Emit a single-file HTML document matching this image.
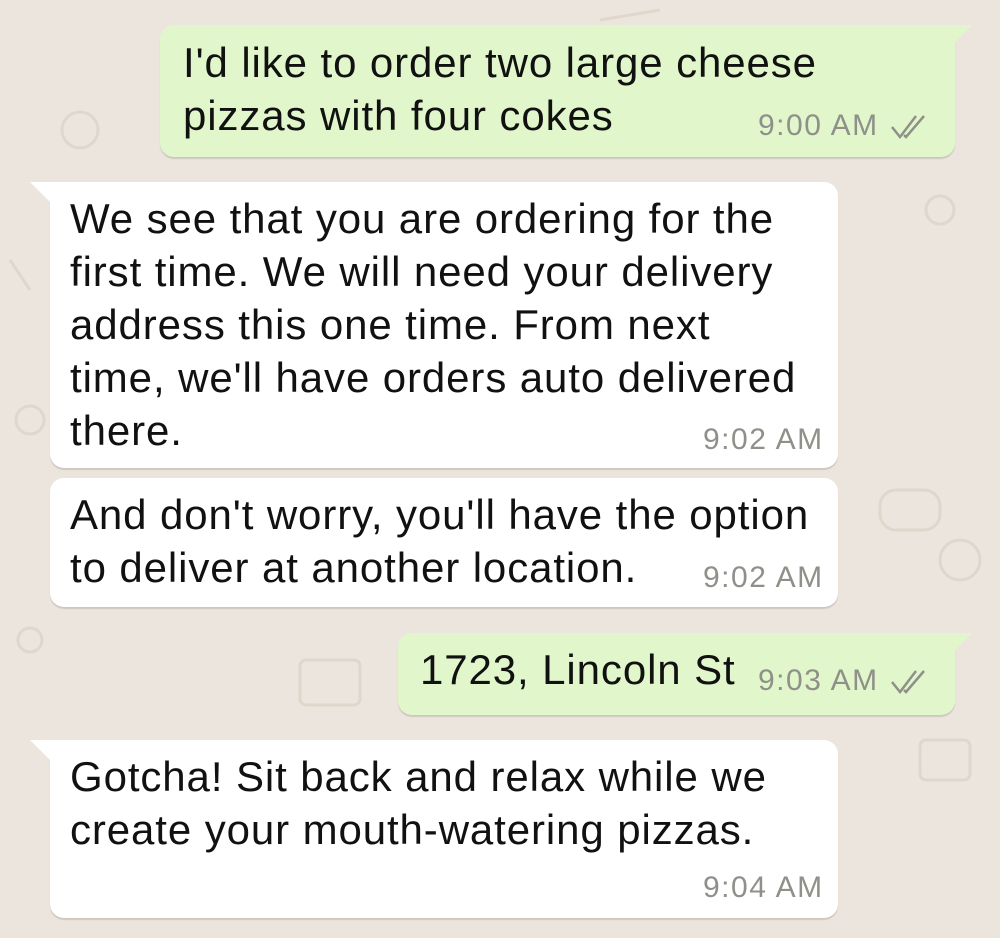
<!DOCTYPE html>
<html><head><meta charset="utf-8"><style>
*{margin:0;padding:0;box-sizing:border-box}
body{width:1000px;height:938px;background:#ece5dd;position:relative;overflow:hidden;font-family:"Liberation Sans",sans-serif;color:#111}
.b{position:absolute;border-radius:14px;box-shadow:0 2px 1px rgba(0,0,0,0.13)}
.g{background:#e1f7cb}
.w{background:#fff}
.t{position:absolute;font-size:42px;letter-spacing:0.9px;line-height:53px;white-space:nowrap}
.tm{position:absolute;font-size:30px;letter-spacing:1.5px;color:#8f9089;white-space:nowrap}
</style></head><body>
<svg width="1000" height="938" style="position:absolute;left:0;top:0" fill="none" stroke="#e0d7cc" stroke-width="3">
<circle cx="80" cy="130" r="18"/><circle cx="940" cy="210" r="14"/><circle cx="960" cy="560" r="20"/><circle cx="30" cy="640" r="12"/><rect x="300" y="660" width="60" height="45" rx="6"/><rect x="880" y="490" width="60" height="40" rx="16"/><circle cx="120" cy="560" r="16"/><rect x="920" y="740" width="50" height="40" rx="6"/><circle cx="30" cy="420" r="14"/><path d="M600 20 l60 -10 M10 260 l20 30"/>
</svg>

<div class="b g" style="left:160px;top:25px;width:795px;height:132px;border-top-right-radius:0"></div>
<svg style="position:absolute;left:950px;top:25px" width="24" height="22"><path d="M0 0 H22 L0 22 Z" fill="#e1f7cb"/></svg>
<div class="t" style="left:183px;top:36px">I'd like to order two large cheese</div>
<div class="t" style="left:183px;top:89px">pizzas with four cokes</div>
<div class="tm" style="left:758px;top:109px">9:00 AM</div>
<svg style="position:absolute;left:890px;top:113px" width="40" height="28" fill="none" stroke="#8f9089" stroke-width="2.5"><path d="M2 14 L10 24 L26 3 M14 22 L16 24 L34 3"/></svg>

<div class="b w" style="left:50px;top:182px;width:788px;height:286px;border-top-left-radius:0"></div>
<svg style="position:absolute;left:28px;top:182px" width="24" height="22"><path d="M24 0 H2 L24 22 Z" fill="#fff"/></svg>
<div class="t" style="left:70px;top:192px">We see that you are ordering for the</div>
<div class="t" style="left:70px;top:245px">first time. We will need your delivery</div>
<div class="t" style="left:70px;top:298px">address this one time. From next</div>
<div class="t" style="left:70px;top:351px">time, we'll have orders auto delivered</div>
<div class="t" style="left:70px;top:404px">there.</div>
<div class="tm" style="left:703px;top:423px">9:02 AM</div>

<div class="b w" style="left:50px;top:478px;width:788px;height:129px"></div>
<div class="t" style="left:70px;top:488px">And don't worry, you'll have the option</div>
<div class="t" style="left:70px;top:541px">to deliver at another location.</div>
<div class="tm" style="left:703px;top:561px">9:02 AM</div>

<div class="b g" style="left:398px;top:633px;width:557px;height:82px;border-top-right-radius:0"></div>
<svg style="position:absolute;left:950px;top:633px" width="24" height="22"><path d="M0 0 H22 L0 22 Z" fill="#e1f7cb"/></svg>
<div class="t" style="left:420px;top:643px">1723, Lincoln St</div>
<div class="tm" style="left:758px;top:664px">9:03 AM</div>
<svg style="position:absolute;left:890px;top:668px" width="40" height="28" fill="none" stroke="#8f9089" stroke-width="2.5"><path d="M2 14 L10 24 L26 3 M14 22 L16 24 L34 3"/></svg>

<div class="b w" style="left:50px;top:740px;width:788px;height:178px;border-top-left-radius:0"></div>
<svg style="position:absolute;left:28px;top:740px" width="24" height="22"><path d="M24 0 H2 L24 22 Z" fill="#fff"/></svg>
<div class="t" style="left:70px;top:750px">Gotcha! Sit back and relax while we</div>
<div class="t" style="left:70px;top:803px">create your mouth-watering pizzas.</div>
<div class="tm" style="left:703px;top:871px">9:04 AM</div>
</body></html>
